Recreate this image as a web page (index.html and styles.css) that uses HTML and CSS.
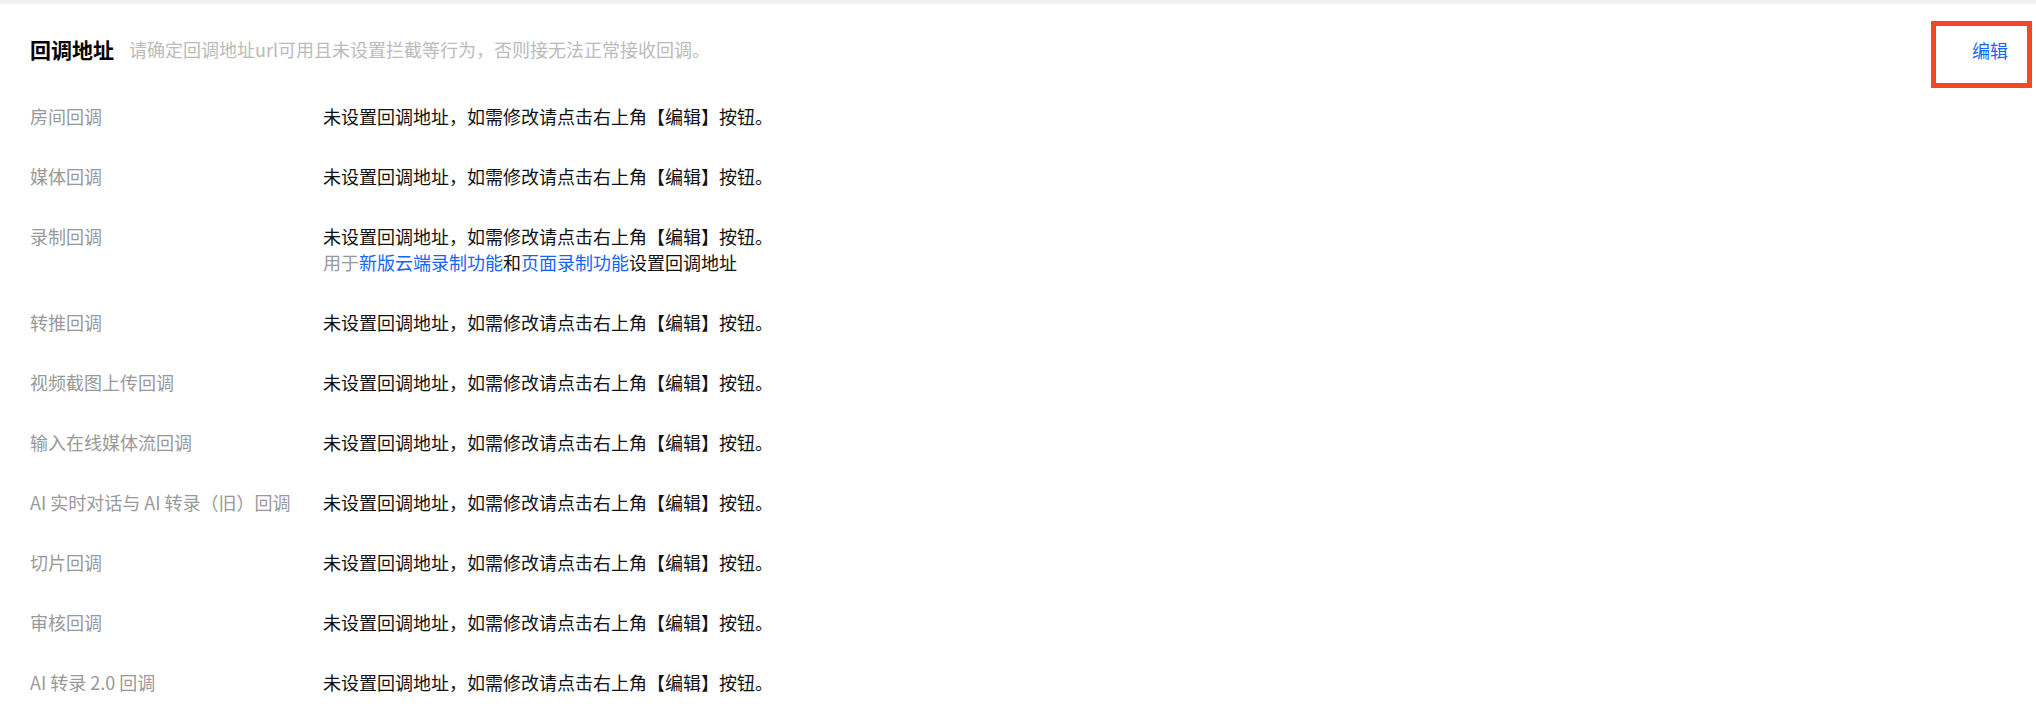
FILE: index.html
```html
<!DOCTYPE html>
<html lang="zh-CN">
  <head>
    <meta charset="UTF-8" />
    <meta name="viewport" content="width=device-width, initial-scale=1.0" />
    <title>回调地址</title>
    <link rel="stylesheet" href="styles.css">
  </head>
  <body>
    <div class="topbar"></div>
    <div class="panel">
      <div class="panel-header">
        <div class="title">
          <h2>回调地址</h2>
          <span class="hint">请确定回调地址url可用且未设置拦截等行为，否则接无法正常接收回调。</span>
        </div>
        <a href="#" class="edit-btn">编辑</a>
      </div>
      <div class="list">
        <div class="row">
          <div class="label">房间回调</div>
          <div class="value">未设置回调地址，如需修改请点击右上角【编辑】按钮。</div>
        </div>
        <div class="row">
          <div class="label">媒体回调</div>
          <div class="value">未设置回调地址，如需修改请点击右上角【编辑】按钮。</div>
        </div>
        <div class="row">
          <div class="label">录制回调</div>
          <div class="value">
            未设置回调地址，如需修改请点击右上角【编辑】按钮。
            <div class="note"><span class="muted">用于</span><a href="#">新版云端录制功能</a>和<a href="#">页面录制功能</a>设置回调地址</div>
          </div>
        </div>
        <div class="row">
          <div class="label">转推回调</div>
          <div class="value">未设置回调地址，如需修改请点击右上角【编辑】按钮。</div>
        </div>
        <div class="row">
          <div class="label">视频截图上传回调</div>
          <div class="value">未设置回调地址，如需修改请点击右上角【编辑】按钮。</div>
        </div>
        <div class="row">
          <div class="label">输入在线媒体流回调</div>
          <div class="value">未设置回调地址，如需修改请点击右上角【编辑】按钮。</div>
        </div>
        <div class="row">
          <div class="label">AI 实时对话与 AI 转录（旧）回调</div>
          <div class="value">未设置回调地址，如需修改请点击右上角【编辑】按钮。</div>
        </div>
        <div class="row">
          <div class="label">切片回调</div>
          <div class="value">未设置回调地址，如需修改请点击右上角【编辑】按钮。</div>
        </div>
        <div class="row">
          <div class="label">审核回调</div>
          <div class="value">未设置回调地址，如需修改请点击右上角【编辑】按钮。</div>
        </div>
        <div class="row">
          <div class="label">AI 转录 2.0 回调</div>
          <div class="value">未设置回调地址，如需修改请点击右上角【编辑】按钮。</div>
        </div>
      </div>
    </div>
  </body>
</html>
```

FILE: styles.css
```css
body {
  margin: 0;
  background: #fff;
  color: #111;
  font-family: "Noto Sans CJK SC", "Noto Sans", sans-serif;
  font-size: 18px;
  line-height: 26px;
}

.topbar {
  height: 4px;
  background: #eef0f4;
}

.panel {
  padding: 0 4px 0 30px;
}

.panel-header {
  display: flex;
  justify-content: space-between;
  align-items: flex-start;
  padding-top: 17px;
}

.title {
  display: flex;
  align-items: center;
  gap: 15px;
  margin-top: 15px;
}

h2 {
  margin: 0;
  font-size: 21px;
  font-weight: 700;
  color: #000;
}

.hint {
  color: #bbb;
}

.edit-btn {
  display: block;
  padding: 11px 19px 20px 36px;
  border: 5px solid #ef4a22;
  color: #1664ff;
  text-decoration: none;
}

.list {
  padding-top: 15px;
}

.row {
  display: grid;
  grid-template-columns: 293px 1fr;
  padding-bottom: 34px;
}

.label {
  color: #999;
}

.value {
  color: #111;
}

.note a {
  color: #1664ff;
  text-decoration: none;
}

.muted {
  color: #999;
}
```
